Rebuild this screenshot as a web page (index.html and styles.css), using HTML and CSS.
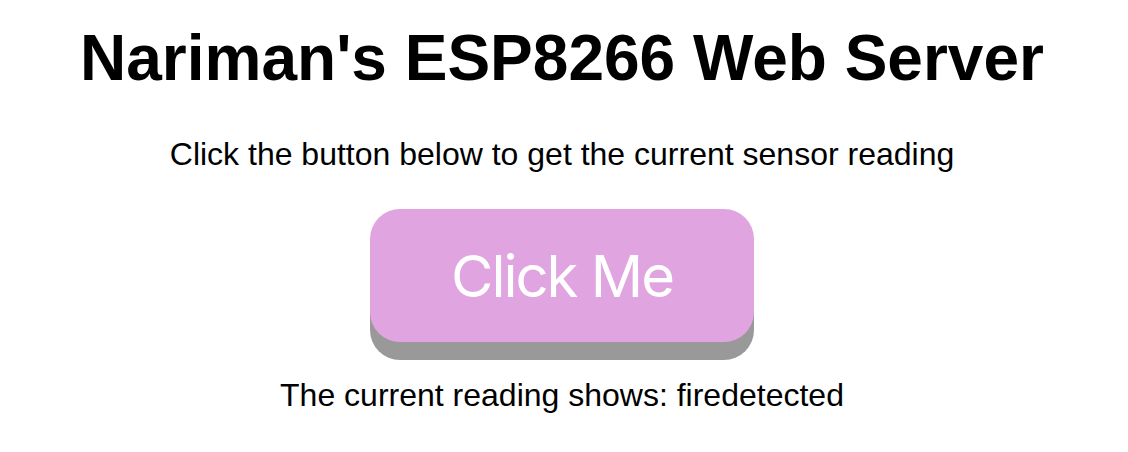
FILE: index.html
```html
<!DOCTYPE html>
<html>
<head>
<meta charset="utf-8">
<link rel="stylesheet" href="styles.css">
</head>
<body>
<main class="page">
  <h1 class="title">Nariman's ESP8266 Web Server</h1>
  <p class="intro">Click the button below to get the current sensor reading</p>
  <button class="btn">Click Me</button>
  <p class="reading">The current reading shows: firedetected</p>
</main>
</body>
</html>
```
FILE: styles.css
```css
html, body {
  margin: 0;
  padding: 0;
  background: #fff;
}
body {
  padding: 8px 12px 8px 8px;
  font-family: "Liberation Sans", Arial, sans-serif;
  color: #000;
}
.page {
  display: flex;
  flex-direction: column;
  align-items: center;
  text-align: center;
}
.title {
  margin: 13px 0 0;
  font-size: 64px;
  font-weight: bold;
  line-height: normal;
}
.intro {
  margin: 41px 0 0;
  font-size: 32px;
  line-height: normal;
}
.btn {
  margin-top: 36px;
  width: 384px;
  height: 133px;
  border: none;
  border-radius: 30px;
  background: #e0a4e0;
  color: #fff;
  font-family: "Inter", "Roboto", sans-serif;
  font-size: 58px;
  letter-spacing: -2px;
  font-weight: 400;
  box-shadow: 0 18px #999;
  padding: 0;
  cursor: pointer;
}
.reading {
  margin: 35px 0 0;
  font-size: 32px;
  line-height: normal;
}
```
